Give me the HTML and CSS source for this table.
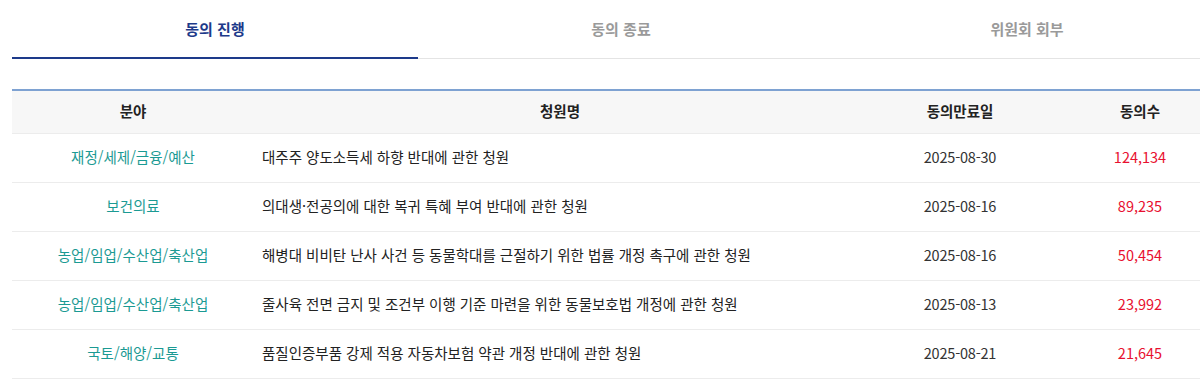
FILE: index.html
```html
<!DOCTYPE html>
<html lang="ko">
<head>
<meta charset="utf-8">
<link rel="stylesheet" href="styles.css">
</head>
<body>
<div class="wrap">
  <ul class="tabs">
    <li class="tab active">동의 진행</li>
    <li class="tab">동의 종료</li>
    <li class="tab">위원회 회부</li>
  </ul>
  <table class="list">
    <colgroup>
      <col class="c1"><col class="c2"><col class="c3"><col class="c4">
    </colgroup>
    <thead>
      <tr><th>분야</th><th>청원명</th><th>동의만료일</th><th>동의수</th></tr>
    </thead>
    <tbody>
      <tr><td class="cat">재정/세제/금융/예산</td><td class="title">대주주 양도소득세 하향 반대에 관한 청원</td><td class="date">2025-08-30</td><td class="cnt">124,134</td></tr>
      <tr><td class="cat">보건의료</td><td class="title">의대생·전공의에 대한 복귀 특혜 부여 반대에 관한 청원</td><td class="date">2025-08-16</td><td class="cnt">89,235</td></tr>
      <tr><td class="cat">농업/임업/수산업/축산업</td><td class="title">해병대 비비탄 난사 사건 등 동물학대를 근절하기 위한 법률 개정 촉구에 관한 청원</td><td class="date">2025-08-16</td><td class="cnt">50,454</td></tr>
      <tr><td class="cat">농업/임업/수산업/축산업</td><td class="title">줄사육 전면 금지 및 조건부 이행 기준 마련을 위한 동물보호법 개정에 관한 청원</td><td class="date">2025-08-13</td><td class="cnt">23,992</td></tr>
      <tr><td class="cat">국토/해양/교통</td><td class="title">품질인증부품 강제 적용 자동차보험 약관 개정 반대에 관한 청원</td><td class="date">2025-08-21</td><td class="cnt">21,645</td></tr>
    </tbody>
  </table>
</div>
</body>
</html>
```

FILE: styles.css
```css
* { box-sizing: border-box; }
html, body { margin: 0; padding: 0; background: #fff; }
body {
  font-family: "Noto Sans CJK KR", "Noto Sans", sans-serif;
  color: #222;
  overflow: hidden;
}
.wrap {
  width: 1218px;
  margin-left: 12px;
}
.tabs {
  list-style: none;
  margin: 0;
  padding: 0;
  display: grid;
  grid-template-columns: repeat(3, 1fr);
  border-bottom: 1px solid #e4e4e4;
}
.tab {
  height: 59px;
  padding-top: 16px;
  text-align: center;
  font-size: 15px;
  font-weight: 700;
  line-height: 26px;
  color: #9a9a9a;
  margin-bottom: -1px;
  border-bottom: 1px solid #e4e4e4;
}
.tab.active {
  color: #1d3a8a;
  border-bottom: 2px solid #1d3a8a;
}
.list {
  margin-top: 30px;
  width: 100%;
  border-collapse: collapse;
  table-layout: fixed;
  border-top: 2px solid #7ea2d2;
  font-size: 14.5px;
}
.c1 { width: 242px; }
.c2 { width: 612px; }
.c3 { width: 188px; }
.c4 { width: 176px; }
thead th {
  height: 43px;
  background: #f7f7f7;
  font-weight: 700;
  color: #222;
  text-align: center;
  border-bottom: 1px solid #ececec;
  padding: 0 0 2px;
}
thead th:nth-child(4) { padding-right: 4px; }
tbody td {
  height: 49px;
  border-bottom: 1px solid #ececec;
  text-align: center;
  padding: 0 0 3px;
}
tbody td.title { text-align: left; padding-left: 8px; color: #222; }
td.cat { color: #1b9a93; }
td.date { color: #333; letter-spacing: -0.2px; }
td.cnt { color: #e8102f; padding-right: 4px; }
```
